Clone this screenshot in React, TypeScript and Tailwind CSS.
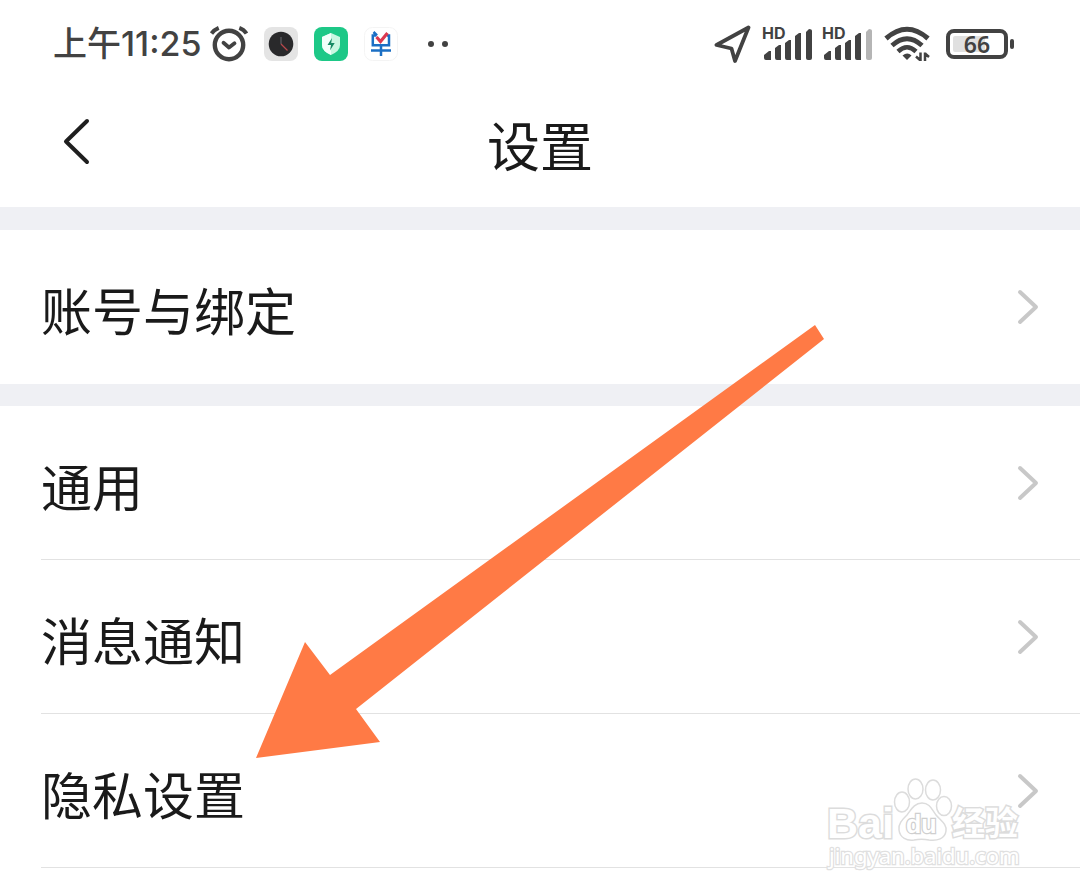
import React from "react";

function AlarmIcon() {
  return (
    <svg viewBox="0 0 40 38" className="h-[38px] w-10" fill="none" stroke="#424242" strokeLinecap="round" strokeLinejoin="round" aria-hidden="true">
      <circle cx="20" cy="20" r="14.200" strokeWidth="4.400" />
      <path d="M14.500 17.800 20 22.500 25.500 18.300" strokeWidth="3.800" />
      <path d="M2.500 8.500Q5.500 4.500 9.700 2.800M30.300 2.800Q35 4.500 37.500 8.500" strokeWidth="4" strokeLinecap="butt" />
    </svg>
  );
}

function ClockAppIcon() {
  return (
    <svg viewBox="0 0 34 34" className="size-[34px]" aria-hidden="true">
      <rect width="34" height="34" rx="8" fill="#e4e4e4" />
      <circle cx="17" cy="17" r="12.300" fill="#29292b" />
      <path d="M17 10v7" stroke="#55555a" strokeWidth="1.500" />
      <path d="m17 17 6.500 6.500" stroke="#b9484c" strokeWidth="1.200" />
    </svg>
  );
}

function ShieldAppIcon() {
  return (
    <svg viewBox="0 0 34 34" className="size-[34px]" aria-hidden="true">
      <rect width="34" height="34" rx="8" fill="#1dc887" />
      <path d="M17 6 26 10v8q0 6-9 10-9-4-9-10v-8z" fill="#c9f7e2" />
      <path d="M17 6v22q-9-4-9-10v-8z" fill="#f3fffa" />
      <path d="m18 11-4.500 7H17l-1 5.500 4.700-7.500h-3.500z" fill="#168a64" />
    </svg>
  );
}

function TaskAppIcon() {
  return (
    <svg viewBox="0 0 34 34" className="size-[34px]" fill="none" aria-hidden="true">
      <rect x=".5" y=".5" width="33" height="33" rx="8" fill="#fff" stroke="#f4f4f4" />
      <path d="M12.500 8.500H8.800v9.700H25V8.500h-2M7 23.500h20M17 18v11M9.500 5l3.500 3.500" stroke="#1b6fc4" strokeWidth="2.500" />
      <path d="m12.500 10 4 4.500L23.500 6" stroke="#dc3950" strokeWidth="3.200" />
    </svg>
  );
}

function LocationIcon() {
  return (
    <svg viewBox="0 0 38 38" className="size-[38px]" fill="none" stroke="#424242" strokeWidth="3.800" strokeLinejoin="round" aria-hidden="true">
      <path d="M34.500 2.500 2.500 20l15 3.500 3.500 12.500z" />
    </svg>
  );
}

function SignalIcon({ last }: { last: string }) {
  return (
    <div className="relative h-9 w-[50px]">
      <span className="absolute -top-px left-0 font-['Inter'] text-base leading-4 font-bold text-[#424242]">HD</span>
      <svg viewBox="0 0 50 36" className="size-full" fill="#424242" aria-hidden="true">
        <path d="M2 31v-2l5-4h2v9H4q-2 0-2-2zM13 32V22l4-3h2v15h-4q-2 0-2-2zM23 32V17l4-3h2v20h-4q-2 0-2-2zM33 32V10l4-3h2v27h-4q-2 0-2-2z" />
        <path d="M44 32V6l3-3q3 0 3 2v27q0 2-2 2h-2q-2 0-2-2z" fill={last} />
      </svg>
    </div>
  );
}

function WifiIcon() {
  return (
    <svg viewBox="0 0 46 36" className="h-9 w-[46px]" fill="none" stroke="#424242" aria-hidden="true">
      <path d="M2 12.500Q23-6 44 12.500" strokeWidth="5" />
      <path d="M8 19.500Q23 6 38 19.500" strokeWidth="4.800" />
      <path d="M14 25.500Q23 17 32 25.500" strokeWidth="4.500" />
      <path d="M18.500 29.500q5-4 9 0l-4.500 4.500z" fill="#424242" stroke="none" />
      <path d="M36.500 26.500V35M32 30.500l4 3.500M41 35v-8.500M45 31l-4-3.500" strokeWidth="2.500" />
    </svg>
  );
}

function Battery() {
  return (
    <div className="flex items-center gap-0.5">
      <div className="flex h-[30px] w-[62px] items-center rounded-lg border-4 border-[#424242] p-[3px]">
        <div className="relative h-full w-full">
          <div className="h-full w-2/3 rounded-xs bg-[#e0e0e0]" />
          <span className="absolute inset-0 flex items-center justify-center font-['Noto_Sans'] text-[23px] leading-none font-semibold text-[#424242]">66</span>
        </div>
      </div>
      <div className="h-2.5 w-1 rounded-sm bg-[#424242]" />
    </div>
  );
}

function StatusBar() {
  return (
    <div className="flex h-[88px] items-center justify-between pr-[66px] pl-[53px] text-[#424242]">
      <div className="flex items-center">
        <span className="font-['Inter','Noto_Sans_CJK_SC',sans-serif] text-[34px] leading-10 font-medium">上午11:25</span>
        <div className="ml-[7px] flex items-center gap-[15px]">
          <AlarmIcon />
          <div className="flex items-center gap-4">
            <ClockAppIcon />
            <ShieldAppIcon />
            <TaskAppIcon />
          </div>
        </div>
        <div className="ml-[30px] flex gap-2">
          <span className="size-1.5 rounded-full bg-[#424242]" />
          <span className="size-1.5 rounded-full bg-[#424242]" />
        </div>
      </div>
      <div className="flex items-center gap-4">
        <div className="flex items-center gap-2.5">
          <LocationIcon />
          <SignalIcon last="#424242" />
          <SignalIcon last="#b5b5b5" />
        </div>
        <div className="-ml-1 flex items-center gap-4">
          <WifiIcon />
          <Battery />
        </div>
      </div>
    </div>
  );
}

function SettingsRow({ label, divided = false }: { label: string; divided?: boolean }) {
  return (
    <li>
      <a href="#" className="block pl-[41px]">
        <span className={divided ? "flex h-[154px] items-center justify-between border-b border-[#e2e2e2] pr-10" : "flex h-[154px] items-center justify-between pr-10"}>
          <span className="pt-1 text-[51px] leading-[76px]">{label}</span>
          <svg viewBox="0 0 24 38" className="h-[38px] w-6" fill="none" stroke="#c8c8c8" strokeWidth="4" strokeLinecap="round" strokeLinejoin="round" aria-hidden="true">
            <path d="M4 4 20 19 4 34" />
          </svg>
        </span>
      </a>
    </li>
  );
}

function Watermark() {
  return (
    <svg viewBox="0 0 210 100" className="pointer-events-none absolute right-[50px] bottom-[21px] h-[100px] w-[210px]" fill="#fff" stroke="#dcdcdc" strokeWidth="1.500">
      <text x="7" y="65" fontFamily="Liberation Sans" fontWeight="700" fontSize="43" paintOrder="stroke" strokeWidth="3">Bai</text>
      <ellipse cx="82" cy="29" rx="7.500" ry="10" />
      <ellipse cx="95.500" cy="16" rx="7.500" ry="10" />
      <ellipse cx="113" cy="17" rx="7.500" ry="10" />
      <ellipse cx="124" cy="33" rx="7.500" ry="9.500" />
      <path d="M102 30c-8 0-11 7-15 12-5 5-9 9-8 15 1 8 8 11 15 10 5-1 10-1 15 0 8 1 16-1 17-9 1-7-5-10-10-16-4-5-6-12-14-12z" />
      <text x="86" y="60" fontFamily="Liberation Sans" fontSize="25" fontWeight="700" paintOrder="stroke" strokeWidth="2.500" stroke="#cfcfcf">du</text>
      <text x="132" y="62" fontFamily="Noto Sans CJK SC" fontSize="33" fontWeight="700" paintOrder="stroke" strokeWidth="3">经验</text>
      <text x="9" y="91" fontFamily="Noto Sans" fontSize="22" paintOrder="stroke" strokeWidth="2.500" stroke="#e0e0e0">jingyan.baidu.com</text>
    </svg>
  );
}

export default function App() {
  return (
    <div className="relative overflow-hidden bg-white pb-[26px] font-['Noto_Sans_CJK_SC',sans-serif] text-[#1a1a1a]">
      <StatusBar />
      <header className="grid h-[119px] grid-cols-[1fr_auto_1fr] items-center pb-2">
        <button type="button" aria-label="返回" className="mb-1.5 ml-[60px] w-8">
          <svg viewBox="0 0 32 48" className="h-12 w-8" fill="none" stroke="#1f1f1f" strokeWidth="4" strokeLinecap="round" strokeLinejoin="round" aria-hidden="true">
            <path d="M27 4 6 24.500 27 45" />
          </svg>
        </button>
        <h1 className="text-[53px] leading-[76px] font-normal">设置</h1>
      </header>
      <main>
        <ul className="border-t-[23px] border-[#eff0f4]">
          <SettingsRow label="账号与绑定" />
        </ul>
        <ul className="border-t-[22px] border-[#eff0f4]">
          <SettingsRow label="通用" divided />
          <SettingsRow label="消息通知" divided />
          <SettingsRow label="隐私设置" divided />
        </ul>
      </main>
      <svg viewBox="0 0 568 434" className="pointer-events-none absolute top-[325px] left-[256px] h-[434px] w-[568px]" fill="#ff7a45" aria-hidden="true">
        <path d="M0 433 49 317 74 350 559 0 568 14 100 384 124 417z" />
      </svg>
      <Watermark />
    </div>
  );
}
